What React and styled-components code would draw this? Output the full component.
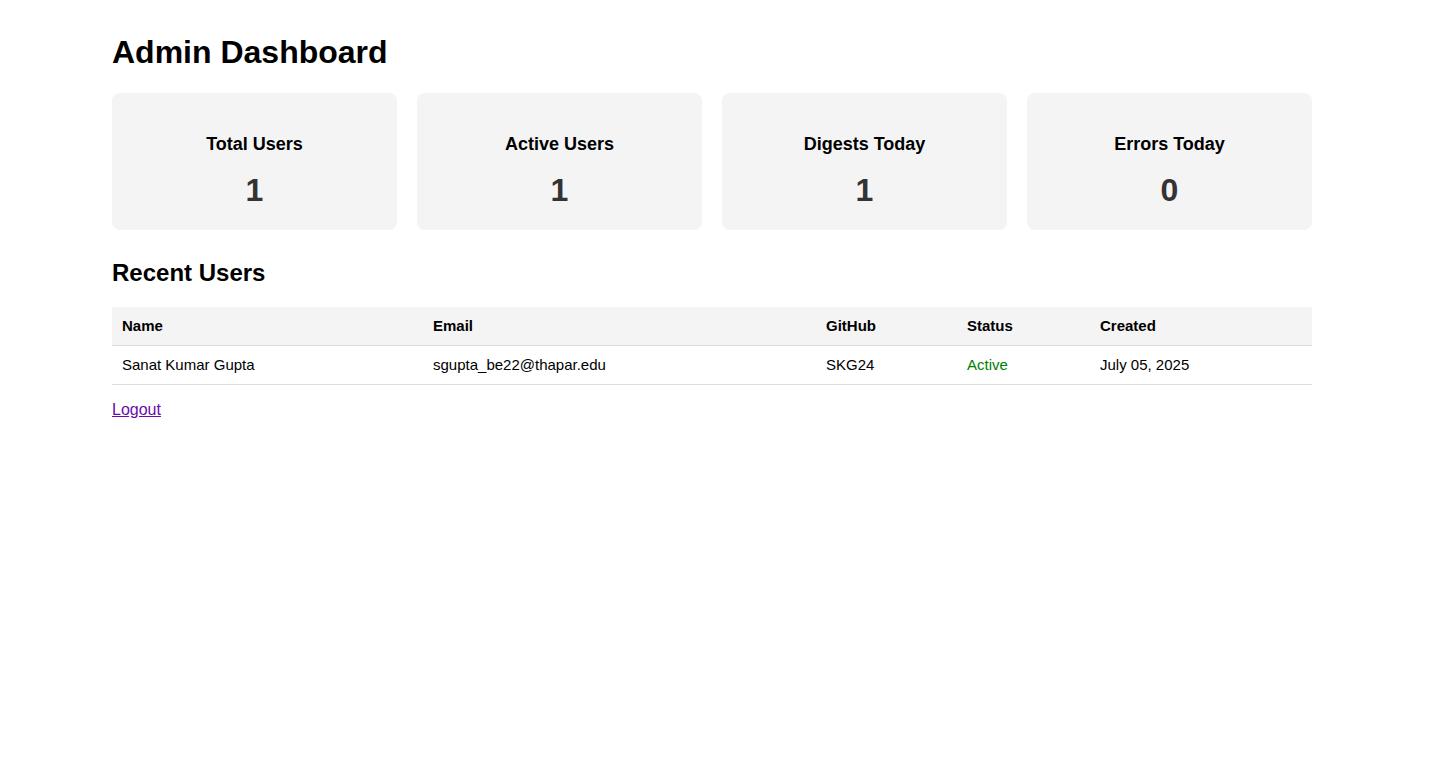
import React from 'react'
import styled, { createGlobalStyle } from 'styled-components'

const GlobalStyle = createGlobalStyle`
  body {
    margin: 0;
    background: #fff;
    color: #000;
    font-family: "Liberation Sans", Arial, Helvetica, sans-serif;
  }
`

const stats = [
  { label: 'Total Users', value: 1 },
  { label: 'Active Users', value: 1 },
  { label: 'Digests Today', value: 1 },
  { label: 'Errors Today', value: 0 },
]

const columns = [
  { key: 'name', title: 'Name', width: 311 },
  { key: 'email', title: 'Email', width: 393 },
  { key: 'github', title: 'GitHub', width: 141 },
  { key: 'status', title: 'Status', width: 133 },
  { key: 'created', title: 'Created', width: 222 },
]

const users = [
  {
    name: 'Sanat Kumar Gupta',
    email: 'sgupta_be22@thapar.edu',
    github: 'SKG24',
    status: 'Active',
    created: 'July 05, 2025',
  },
]

function App() {
  return (
    <>
      <GlobalStyle />
      <Container>
        <Title>Admin Dashboard</Title>
        <Stats>
          {stats.map((s) => (
            <Card key={s.label}>
              <CardLabel>{s.label}</CardLabel>
              <CardValue>{s.value}</CardValue>
            </Card>
          ))}
        </Stats>
        <Subtitle>Recent Users</Subtitle>
        <Table>
          <colgroup>
            {columns.map((c) => (
              <col key={c.key} style={{ width: c.width }} />
            ))}
          </colgroup>
          <thead>
            <tr>
              {columns.map((c) => (
                <Th key={c.key}>{c.title}</Th>
              ))}
            </tr>
          </thead>
          <tbody>
            {users.map((u) => (
              <tr key={u.email}>
                <Td>{u.name}</Td>
                <Td>{u.email}</Td>
                <Td>{u.github}</Td>
                <Td $active={u.status === 'Active'}>{u.status}</Td>
                <Td>{u.created}</Td>
              </tr>
            ))}
          </tbody>
        </Table>
        <LogoutLink href="#logout">Logout</LogoutLink>
      </Container>
    </>
  )
}

export default App

const Container = styled.div`
  width: 1200px;
  margin: 0 112px;
  padding-top: 34px;
`

const Title = styled.h1`
  font-size: 32px;
  font-weight: bold;
  margin: 0 0 22px;
  line-height: normal;
`

const Stats = styled.div`
  display: grid;
  grid-template-columns: repeat(4, 1fr);
  gap: 20px;
`

const Card = styled.div`
  background: #f4f4f4;
  border-radius: 8px;
  padding: 41px 20px 21px;
  text-align: center;
`

const CardLabel = styled.h3`
  font-size: 18px;
  font-weight: bold;
  margin: 0 0 17px;
  line-height: normal;
`

const CardValue = styled.div`
  font-size: 32px;
  font-weight: bold;
  color: #333;
  line-height: normal;
`

const Subtitle = styled.h2`
  font-size: 24px;
  font-weight: bold;
  margin: 29px 0 20px;
  line-height: normal;
`

const Table = styled.table`
  width: 100%;
  border-collapse: collapse;
  table-layout: fixed;
  font-size: 15px;
  line-height: 18px;
  margin-bottom: 16px;
`

const Th = styled.th`
  background: #f4f4f4;
  text-align: left;
  font-weight: bold;
  padding: 10px;
  border-bottom: 1px solid #ddd;
`

const Td = styled.td`
  padding: 10px;
  border-bottom: 1px solid #ddd;
  color: ${(p) => (p.$active ? 'green' : 'inherit')};
`

const LogoutLink = styled.a`
  display: inline-block;
  font-size: 16px;
  color: #6a0aa8;
  text-decoration: underline;
`
